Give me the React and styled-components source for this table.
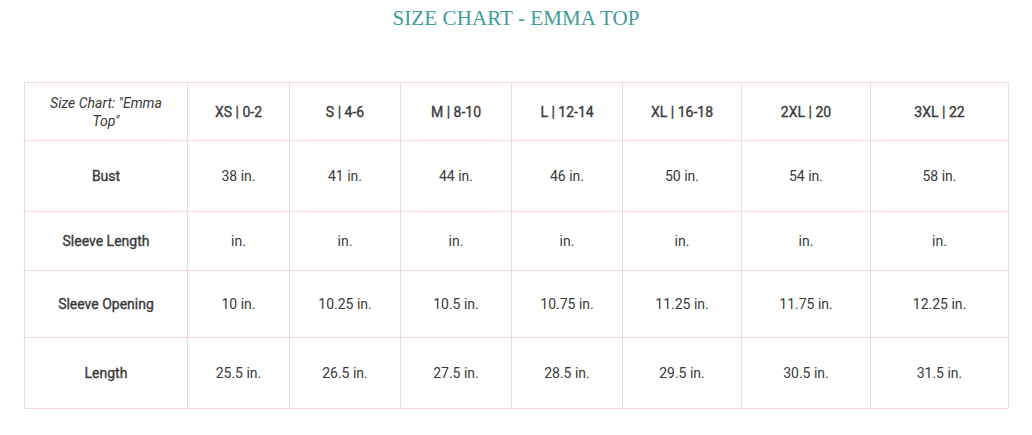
import React from 'react';
import styled, { createGlobalStyle } from 'styled-components';

const GlobalStyle = createGlobalStyle`
  body {
    margin: 0;
    background: #ffffff;
    font-family: Roboto, "Liberation Sans", sans-serif;
  }
`;

const Page = styled.div`
  padding: 0 24px 0 24px;
`;

const Title = styled.h2`
  margin: 0;
  padding-top: 6px;
  height: 82px;
  box-sizing: border-box;
  text-align: center;
  font-family: "Liberation Serif", "DejaVu Serif", serif;
  font-weight: 400;
  font-size: 21px;
  color: #3f9c99;
  letter-spacing: 0.1px;
`;

const Table = styled.table`
  width: 984px;
  border-collapse: collapse;
  table-layout: fixed;
  color: #3a3a3a;
  font-size: 14px;
`;

const Cell = styled.td`
  border: 1px solid #f2d8df;
  text-align: center;
  vertical-align: middle;
  padding: 0 ${({ $italic }) => ($italic ? 22 : 10)}px;
  font-weight: 400;
  -webkit-text-stroke: ${({ $bold }) => ($bold ? '0.35px #3a3a3a' : '0')};
  font-style: ${({ $italic }) => ($italic ? 'italic' : 'normal')};
  line-height: 18px;
`;

const Row = styled.tr`
  height: ${({ $h }) => $h}px;
`;

const widths = [163, 102, 111, 111, 111, 119, 129, 138];
const sizes = ['XS | 0-2', 'S | 4-6', 'M | 8-10', 'L | 12-14', 'XL | 16-18', '2XL | 20', '3XL | 22'];

const rows = [
  { label: 'Bust', h: 71, values: ['38 in.', '41 in.', '44 in.', '46 in.', '50 in.', '54 in.', '58 in.'] },
  { label: 'Sleeve Length', h: 59, values: ['in.', 'in.', 'in.', 'in.', 'in.', 'in.', 'in.'] },
  { label: 'Sleeve Opening', h: 67, values: ['10 in.', '10.25 in.', '10.5 in.', '10.75 in.', '11.25 in.', '11.75 in.', '12.25 in.'] },
  { label: 'Length', h: 71, values: ['25.5 in.', '26.5 in.', '27.5 in.', '28.5 in.', '29.5 in.', '30.5 in.', '31.5 in.'] },
];

export default function App() {
  return (
    <>
      <GlobalStyle />
      <Page>
        <Title>SIZE CHART - EMMA TOP</Title>
        <Table>
          <colgroup>
            {widths.map((w, i) => <col key={i} style={{ width: w }} />)}
          </colgroup>
          <tbody>
            <Row $h={58}>
              <Cell $italic>Size Chart: "Emma Top"</Cell>
              {sizes.map(s => <Cell key={s} $bold>{s}</Cell>)}
            </Row>
            {rows.map(r => (
              <Row key={r.label} $h={r.h}>
                <Cell $bold>{r.label}</Cell>
                {r.values.map((v, i) => <Cell key={i}>{v}</Cell>)}
              </Row>
            ))}
          </tbody>
        </Table>
      </Page>
    </>
  );
}
